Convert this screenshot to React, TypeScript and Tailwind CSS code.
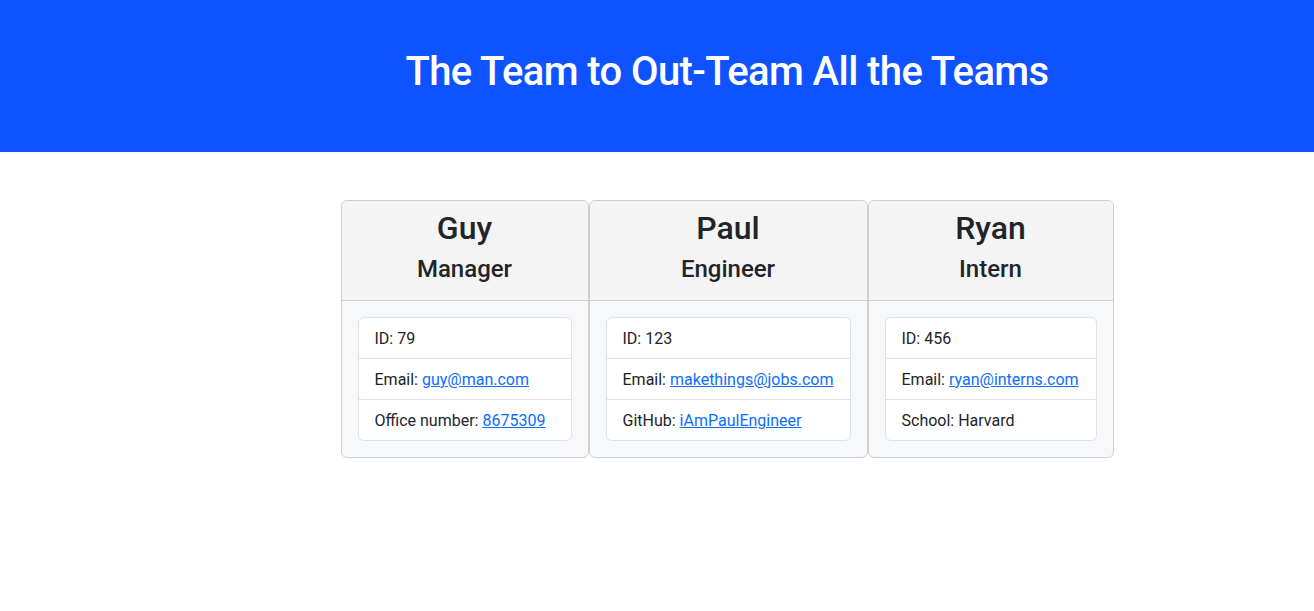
import React from 'react';

type Member = {
  name: string;
  role: string;
  id: string;
  email: string;
  extraLabel: string;
  extraValue: string;
  extraLink: boolean;
  width: string;
};

const team: Member[] = [
  { name: 'Guy', role: 'Manager', id: '79', email: 'guy@man.com', extraLabel: 'Office number', extraValue: '8675309', extraLink: true, width: 'w-[248px]' },
  { name: 'Paul', role: 'Engineer', id: '123', email: 'makethings@jobs.com', extraLabel: 'GitHub', extraValue: 'iAmPaulEngineer', extraLink: true, width: 'w-[279px]' },
  { name: 'Ryan', role: 'Intern', id: '456', email: 'ryan@interns.com', extraLabel: 'School', extraValue: 'Harvard', extraLink: false, width: 'w-[246px]' },
];

const MemberCard = ({ m }: { m: Member }) => (
  <div className={`${m.width} flex flex-col rounded-md border border-[#cfcfcf] bg-[#f7f8fa]`}>
    <div className="rounded-t-md border-b border-[#cfcfcf] bg-[#f4f4f4] px-4 py-2 text-center">
      <h2 className="mb-2 text-[32px] font-medium leading-[38px]">{m.name}</h2>
      <h3 className="mb-2 text-[24px] font-medium leading-[29px]">{m.role}</h3>
    </div>
    <div className="p-4">
      <ul className="whitespace-nowrap rounded-md border border-[#dee2e6] bg-white">
        <li className="px-4 pb-[7px] pt-[9px] leading-6">ID: {m.id}</li>
        <li className="border-t border-[#dee2e6] px-4 pb-[7px] pt-[9px] leading-6">
          Email: <a href="#" className="text-[#0d6efd] underline">{m.email}</a>
        </li>
        <li className="border-t border-[#dee2e6] px-4 pb-[7px] pt-[9px] leading-6">
          {m.extraLabel}:{' '}
          {m.extraLink ? <a href="#" className="text-[#0d6efd] underline">{m.extraValue}</a> : m.extraValue}
        </li>
      </ul>
    </div>
  </div>
);

export default function App() {
  return (
    <div className="min-h-screen bg-white text-[16px] text-[#212529] font-['Roboto','Liberation_Sans',sans-serif]">
      <header className="flex h-[152px] items-center justify-center bg-[#0f52ff] pb-2 pl-[140px]">
        <h1 className="text-[40px] font-medium leading-[48px] tracking-[-0.015em] text-white">The Team to Out-Team All the Teams</h1>
      </header>
      <main className="mt-12 flex justify-center pl-[140px]">
        {team.map((m) => (
          <MemberCard key={m.name} m={m} />
        ))}
      </main>
    </div>
  );
}
